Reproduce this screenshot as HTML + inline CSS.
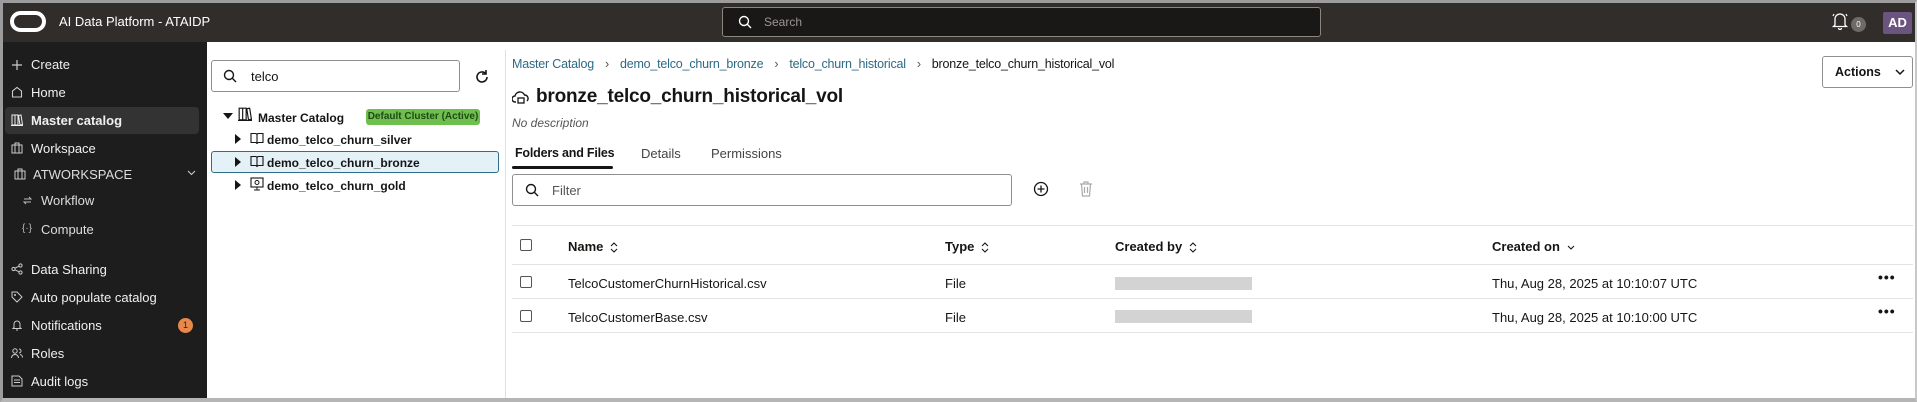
<!DOCTYPE html>
<html><head><meta charset="utf-8"><style>
*{box-sizing:border-box;margin:0;padding:0}
body{width:1917px;height:402px;overflow:hidden;background:#fff;font-family:"Liberation Sans",sans-serif;color:#161513;position:relative}
.abs{position:absolute}
.frame{position:absolute;left:0;top:0;width:1917px;height:402px;border:3px solid #9c9c9c;border-right:2px solid #c8c8c8;border-bottom:4px solid #b5b5b5;pointer-events:none}
.top{left:0;top:0;width:1917px;height:42px;background:#312d2a}
.side{left:0;top:42px;width:207px;height:360px;background:#1d1d1d}
.si{position:absolute;left:31px;color:#f0f0f0;font-size:13px}
.ic{position:absolute;left:11px}
.tr{position:absolute;font-size:12px;font-weight:bold;color:#161513}
.bc{color:#2c6a86}
.th{position:absolute;top:239px;font-size:13px;font-weight:bold;color:#161513}
.td{position:absolute;font-size:13px;color:#161513}
.cb{position:absolute;left:520px;width:12px;height:12px;border:1.5px solid #555;border-radius:2px}
.hl{position:absolute;left:512px;width:1401px;height:1px;background:#e3e3e3}
.bar{position:absolute;left:1115px;width:137px;height:13px;background:#d3d3d3}
.dots{position:absolute;left:1878px;font-size:14px;font-weight:bold;letter-spacing:1px}
.srt{display:inline-block;vertical-align:middle;margin-left:7px}
</style></head><body>
<div class="abs top"></div>
<div class="abs" style="left:10px;top:11px;width:36px;height:21px;border:4px solid #fff;border-radius:11px"></div>
<div class="abs" style="left:59px;top:14px;color:#fff;font-size:13px">AI Data Platform - ATAIDP</div>
<div class="abs" style="left:722px;top:7px;width:599px;height:30px;background:#1a1816;border:1px solid #8a8682;border-radius:3px"></div>
<svg class="abs" style="left:738px;top:15px" width="14" height="14" viewBox="0 0 14 14"><circle cx="6" cy="6" r="4.5" fill="none" stroke="#fff" stroke-width="1.4"/><path d="M9.3 9.3L13 13" stroke="#fff" stroke-width="1.4"/></svg>
<div class="abs" style="left:764px;top:15px;color:#9a9692;font-size:12px">Search</div>
<svg class="abs" style="left:1831px;top:11px" width="18" height="20" viewBox="0 0 18 20"><path d="M4 14V8a5 5 0 0 1 10 0v6l1.5 1.5h-13z M7.5 17a1.5 1.5 0 0 0 3 0" fill="none" stroke="#fff" stroke-width="1.3"/><path d="M2 5l1-2M16 5l-1-2" stroke="#fff" stroke-width="1.2"/></svg>
<div class="abs" style="left:1851px;top:17px;width:15px;height:15px;border-radius:50%;background:#6e6a66;color:#fff;font-size:8px;text-align:center;line-height:15px">0</div>
<div class="abs" style="left:1883px;top:12px;width:29px;height:22px;background:#6b5480;color:#fff;font-size:13px;font-weight:bold;text-align:center;line-height:22px;border-radius:2px">AD</div>

<div class="abs side"></div>
<div class="abs" style="left:5px;top:107px;width:194px;height:27px;background:#333;border-radius:4px"></div>
<svg class="ic" style="top:59px" width="12" height="12" viewBox="0 0 12 12"><path d="M6 1v10M1 6h10" stroke="#ccc" stroke-width="1.2"/></svg><div class="si" style="top:57px">Create</div>
<svg class="ic" style="top:86px" width="12" height="12" viewBox="0 0 12 12"><path d="M1.5 11V5L6 1.5 10.5 5v6z" fill="none" stroke="#ccc" stroke-width="1.1"/></svg><div class="si" style="top:85px">Home</div>
<svg class="ic" style="top:114px" width="12" height="12" viewBox="0 0 12 12"><path d="M1 1h3v10H1zM4 1h3v10H4zM7.5 1.5l2.5-.5 1.5 9.5-2.5.5z M0 11.5h12" fill="none" stroke="#eee" stroke-width="1"/></svg><div class="si" style="top:113px;font-weight:bold">Master catalog</div>
<svg class="ic" style="top:142px" width="12" height="12" viewBox="0 0 12 12"><path d="M1 3h10v8H1zM4 3V1h4v2M4 3v8M8 3v8" fill="none" stroke="#ccc" stroke-width="1"/></svg><div class="si" style="top:141px">Workspace</div>
<svg class="ic" style="top:168px;left:14px" width="12" height="12" viewBox="0 0 12 12"><path d="M1 3h10v8H1zM4 3V1h4v2M4 3v8M8 3v8" fill="none" stroke="#ccc" stroke-width="1"/></svg><div class="si" style="top:167px;left:33px;color:#ddd">ATWORKSPACE</div>
<svg class="ic" style="top:170px;left:187px" width="9" height="6" viewBox="0 0 9 6"><path d="M1 1l3.5 3.5L8 1" fill="none" stroke="#ccc" stroke-width="1.1"/></svg>
<svg class="ic" style="top:195px;left:22px" width="11" height="11" viewBox="0 0 11 11"><path d="M2 4h7l-2-2M9 7H2l2 2" fill="none" stroke="#bbb" stroke-width="1"/></svg><div class="si" style="top:193px;left:41px;color:#ddd">Workflow</div>
<div class="ic" style="top:223px;left:22px;font-size:10px;color:#bbb">{·}</div><div class="si" style="top:222px;left:41px;color:#ddd">Compute</div>
<svg class="ic" style="top:263px" width="12" height="12" viewBox="0 0 12 12"><circle cx="2.5" cy="6" r="1.6" fill="none" stroke="#ccc"/><circle cx="9.5" cy="2.5" r="1.6" fill="none" stroke="#ccc"/><circle cx="9.5" cy="9.5" r="1.6" fill="none" stroke="#ccc"/><path d="M4 5.2l4-2M4 6.8l4 2" stroke="#ccc"/></svg><div class="si" style="top:262px">Data Sharing</div>
<svg class="ic" style="top:291px" width="12" height="12" viewBox="0 0 12 12"><path d="M1 1h5l5 5-5 5-5-5z" fill="none" stroke="#ccc"/><circle cx="4" cy="4" r="1" fill="#ccc"/></svg><div class="si" style="top:290px">Auto populate catalog</div>
<svg class="ic" style="top:319px" width="12" height="12" viewBox="0 0 12 12"><path d="M3 8.5V5a3 3 0 0 1 6 0v3.5l1 1H2z M5 11h2" fill="none" stroke="#ccc"/></svg><div class="si" style="top:318px">Notifications</div>
<div class="abs" style="left:178px;top:318px;width:15px;height:15px;border-radius:50%;background:#e8884a;color:#222;font-size:9px;text-align:center;line-height:15px">1</div>
<svg class="ic" style="top:347px" width="12" height="12" viewBox="0 0 12 12"><circle cx="4" cy="4" r="2.2" fill="none" stroke="#ccc"/><path d="M0.5 11a3.5 3.5 0 0 1 7 0M8 2a2 2 0 0 1 0 4M9 7.5a3 3 0 0 1 2.5 3" fill="none" stroke="#ccc"/></svg><div class="si" style="top:346px">Roles</div>
<svg class="ic" style="top:375px" width="12" height="12" viewBox="0 0 12 12"><path d="M1 1h7l3 3v7H1zM3 5h6M3 7.5h6" fill="none" stroke="#ccc"/></svg><div class="si" style="top:374px">Audit logs</div>

<div class="abs" style="left:211px;top:60px;width:249px;height:32px;border:1px solid #8f8f8f;border-radius:3px"></div>
<svg class="abs" style="left:223px;top:69px" width="14" height="14" viewBox="0 0 14 14"><circle cx="6" cy="6" r="4.5" fill="none" stroke="#161513" stroke-width="1.4"/><path d="M9.3 9.3L13 13" stroke="#161513" stroke-width="1.4"/></svg>
<div class="abs" style="left:251px;top:69px;font-size:13px">telco</div>
<svg class="abs" style="left:474px;top:69px" width="16" height="16" viewBox="0 0 16 16"><path d="M13 8a5 5 0 1 1-1.5-3.6" fill="none" stroke="#161513" stroke-width="1.6"/><path d="M12 1v4h-4" fill="none" stroke="#161513" stroke-width="1.6"/></svg>
<svg class="abs" style="left:223px;top:113px" width="10" height="7" viewBox="0 0 10 7"><path d="M0 0h10L5 6z" fill="#161513"/></svg>
<svg class="abs" style="left:238px;top:107px" width="14" height="14" viewBox="0 0 12 12"><path d="M1 1h3v10H1zM4 1h3v10H4zM7.5 1.5l2.5-.5 1.5 9.5-2.5.5z M0 11.5h12" fill="none" stroke="#161513" stroke-width="1"/></svg>
<div class="tr" style="left:258px;top:111px">Master Catalog</div>
<div class="abs" style="left:366px;top:109px;width:114px;height:16px;background:#6fbf4f;border-radius:3px;color:#1f4a14;font-size:10px;font-weight:bold;text-align:center;line-height:16px">Default Cluster (Active)</div>
<div class="abs" style="left:211px;top:151px;width:288px;height:22px;background:#e4f1f7;border:1px solid #2f6f8a;border-radius:3px"></div>
<svg class="abs" style="left:235px;top:134px" width="6" height="10" viewBox="0 0 6 10"><path d="M0 0v10l6-5z" fill="#161513"/></svg>
<svg class="abs" style="left:250px;top:132px" width="14" height="13" viewBox="0 0 14 13"><path d="M1 1.5h4.5a1.5 1.5 0 0 1 1.5 1.5v9a1.5 1.5 0 0 0-1.5-1.5H1zM13 1.5H8.5A1.5 1.5 0 0 0 7 3v9a1.5 1.5 0 0 1 1.5-1.5H13z" fill="none" stroke="#161513" stroke-width="1.1"/></svg>
<div class="tr" style="left:267px;top:133px">demo_telco_churn_silver</div>
<svg class="abs" style="left:235px;top:157px" width="6" height="10" viewBox="0 0 6 10"><path d="M0 0v10l6-5z" fill="#161513"/></svg>
<svg class="abs" style="left:250px;top:155px" width="14" height="13" viewBox="0 0 14 13"><path d="M1 1.5h4.5a1.5 1.5 0 0 1 1.5 1.5v9a1.5 1.5 0 0 0-1.5-1.5H1zM13 1.5H8.5A1.5 1.5 0 0 0 7 3v9a1.5 1.5 0 0 1 1.5-1.5H13z" fill="none" stroke="#161513" stroke-width="1.1"/></svg>
<div class="tr" style="left:267px;top:156px">demo_telco_churn_bronze</div>
<svg class="abs" style="left:235px;top:180px" width="6" height="10" viewBox="0 0 6 10"><path d="M0 0v10l6-5z" fill="#161513"/></svg>
<svg class="abs" style="left:250px;top:177px" width="14" height="14" viewBox="0 0 14 14"><rect x="1" y="1" width="12" height="9" fill="none" stroke="#161513" stroke-width="1.1"/><circle cx="7" cy="5.5" r="2" fill="none" stroke="#161513"/><path d="M7 10v3M4 13h6" stroke="#161513"/></svg>
<div class="tr" style="left:267px;top:179px">demo_telco_churn_gold</div>

<div class="abs" style="left:505px;top:50px;width:1px;height:352px;background:#e0e0e0"></div>
<div class="abs" style="left:512px;top:57px;font-size:12.5px;letter-spacing:-0.2px"><span class="bc">Master Catalog</span><span style="color:#555;margin:0 11px">›</span><span class="bc">demo_telco_churn_bronze</span><span style="color:#555;margin:0 11px">›</span><span class="bc">telco_churn_historical</span><span style="color:#555;margin:0 11px">›</span>bronze_telco_churn_historical_vol</div>
<svg class="abs" style="left:512px;top:88px" width="18" height="18" viewBox="0 0 18 18"><path d="M4 14H3a3 3 0 0 1 0-6 5 5 0 0 1 9.5-1A3.5 3.5 0 0 1 15 13" fill="none" stroke="#161513" stroke-width="1.4"/><rect x="6" y="10" width="6" height="5" fill="none" stroke="#161513" stroke-width="1.3"/></svg>
<div class="abs" style="left:536px;top:86px;font-size:19px;font-weight:bold;letter-spacing:-0.2px">bronze_telco_churn_historical_vol</div>
<div class="abs" style="left:512px;top:116px;font-size:12px;font-style:italic;color:#555">No description</div>
<div class="abs" style="left:515px;top:146px;font-size:12.5px;font-weight:bold;letter-spacing:-0.2px">Folders and Files</div>
<div class="abs" style="left:641px;top:146px;font-size:13px;color:#444">Details</div>
<div class="abs" style="left:711px;top:146px;font-size:13px;color:#444">Permissions</div>
<div class="abs" style="left:512px;top:166px;width:101px;height:3px;background:#161513;border-radius:2px"></div>
<div class="abs" style="left:512px;top:174px;width:500px;height:32px;border:1px solid #8f8f8f;border-radius:3px"></div>
<svg class="abs" style="left:525px;top:183px" width="14" height="14" viewBox="0 0 14 14"><circle cx="6" cy="6" r="4.5" fill="none" stroke="#161513" stroke-width="1.4"/><path d="M9.3 9.3L13 13" stroke="#161513" stroke-width="1.4"/></svg>
<div class="abs" style="left:552px;top:183px;font-size:13px;color:#555">Filter</div>
<svg class="abs" style="left:1033px;top:181px" width="16" height="16" viewBox="0 0 16 16"><circle cx="8" cy="8" r="6.5" fill="none" stroke="#161513" stroke-width="1.3"/><path d="M8 4.5v7M4.5 8h7" stroke="#161513" stroke-width="1.3"/></svg>
<svg class="abs" style="left:1078px;top:180px" width="16" height="18" viewBox="0 0 16 18"><path d="M2 4h12M6 4V2h4v2M3.5 4l1 12h7l1-12M6.5 7v6M9.5 7v6" fill="none" stroke="#aaa" stroke-width="1.2"/></svg>

<div class="hl" style="top:225px"></div>
<div class="cb" style="top:239px"></div>
<div class="th" style="left:568px">Name<svg class="srt" width="8" height="11" viewBox="0 0 8 11"><path d="M1 4l3-3 3 3M1 7l3 3 3-3" fill="none" stroke="#161513" stroke-width="1.1"/></svg></div>
<div class="th" style="left:945px">Type<svg class="srt" width="8" height="11" viewBox="0 0 8 11"><path d="M1 4l3-3 3 3M1 7l3 3 3-3" fill="none" stroke="#161513" stroke-width="1.1"/></svg></div>
<div class="th" style="left:1115px">Created by<svg class="srt" width="8" height="11" viewBox="0 0 8 11"><path d="M1 4l3-3 3 3M1 7l3 3 3-3" fill="none" stroke="#161513" stroke-width="1.1"/></svg></div>
<div class="th" style="left:1492px">Created on<svg class="srt" width="8" height="6" viewBox="0 0 8 6"><path d="M1 1l3 3 3-3" fill="none" stroke="#161513" stroke-width="1.1"/></svg></div>
<div class="hl" style="top:264px"></div>
<div class="cb" style="top:276px"></div>
<div class="td" style="left:568px;top:276px">TelcoCustomerChurnHistorical.csv</div>
<div class="td" style="left:945px;top:276px">File</div>
<div class="bar" style="top:277px"></div>
<div class="td" style="left:1492px;top:276px">Thu, Aug 28, 2025 at 10:10:07 UTC</div>
<div class="dots" style="top:269px">•••</div>
<div class="hl" style="top:298px"></div>
<div class="cb" style="top:310px"></div>
<div class="td" style="left:568px;top:310px">TelcoCustomerBase.csv</div>
<div class="td" style="left:945px;top:310px">File</div>
<div class="bar" style="top:310px"></div>
<div class="td" style="left:1492px;top:310px">Thu, Aug 28, 2025 at 10:10:00 UTC</div>
<div class="dots" style="top:303px">•••</div>
<div class="hl" style="top:332px"></div>

<div class="abs" style="left:1822px;top:56px;width:91px;height:32px;border:1px solid #8f8f8f;border-radius:3px;font-size:12.5px;font-weight:bold;line-height:30px;padding-left:12px">Actions<svg style="position:absolute;left:72px;top:12px" width="10" height="7" viewBox="0 0 10 7"><path d="M1 1l4 4 4-4" fill="none" stroke="#161513" stroke-width="1.5"/></svg></div>
<div class="frame"></div>
</body></html>
